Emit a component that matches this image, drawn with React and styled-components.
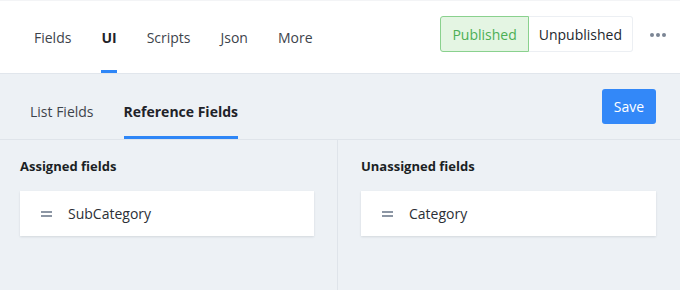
import React from 'react'
import styled, { createGlobalStyle } from 'styled-components'

const GlobalStyle = createGlobalStyle`
    body {
        margin: 0;
        background: #fff;
        font-family: "Open Sans", "Noto Sans", sans-serif;
        color: #2b2f36;
    }
`;

const Page = styled.div`
    width: 680px;
    height: 290px;
    display: flex;
    flex-direction: column;
    border-top: 1px solid #f3f4f6;
    box-sizing: border-box;
`;

const Header = styled.header`
    height: 72px;
    display: flex;
    padding: 0 14px 0 34px;
    border-bottom: 1px solid #e1e6ec;
    background: #fff;
    flex-shrink: 0;
`;

const Tabs = styled.nav`
    display: flex;
    gap: ${({ gap }) => gap}px;
    height: 100%;
`;

const Tab = styled.div`
    display: flex;
    align-items: center;
    box-sizing: border-box;
    padding-top: ${({ offset }) => offset}px;
    border-bottom: 3px solid ${({ active }) => (active ? '#2e86f7' : 'transparent')};
    font-size: 14px;
    font-weight: ${({ active }) => (active ? 700 : 400)};
    color: ${({ active }) => (active ? '#1f2329' : '#3d434b')};
    cursor: pointer;
`;

const HeaderRight = styled.div`
    margin-left: auto;
    display: flex;
    align-items: center;
    align-self: flex-start;
    margin-top: 15px;
    gap: 17px;
`;

const Toggle = styled.div`
    display: flex;
    height: 36px;
`;

const ToggleButton = styled.button`
    font-family: inherit;
    font-size: 14px;
    padding: 0 ${({ active }) => (active ? 11 : 10)}px;
    border: 1px solid ${({ active }) => (active ? '#8ad18e' : '#eceff3')};
    background: ${({ active }) => (active ? '#e4f5e3' : '#fff')};
    color: ${({ active }) => (active ? '#4caf55' : '#23272d')};
    border-radius: ${({ active }) => (active ? '3px 0 0 3px' : '0 3px 3px 0')};
    border-left-width: ${({ active }) => (active ? 1 : 0)}px;
    cursor: pointer;
`;

const Dots = styled.div`
    display: flex;
    gap: 2px;
    padding-top: 1px;
    span {
        width: 4px;
        height: 4px;
        border-radius: 50%;
        background: #7b8594;
    }
`;

const Body = styled.div`
    flex: 1;
    background: #edf1f5;
    display: flex;
    flex-direction: column;
`;

const SubBar = styled.div`
    height: 65px;
    display: flex;
    padding-left: 30px;
    padding-right: 24px;
    border-bottom: 1px solid #dfe4ea;
    flex-shrink: 0;
`;

const SaveButton = styled.button`
    margin-left: auto;
    margin-top: 15px;
    width: 54px;
    height: 35px;
    border: none;
    border-radius: 3px;
    background: #3388f8;
    color: #fff;
    font-family: inherit;
    font-size: 14px;
    cursor: pointer;
`;

const Columns = styled.div`
    flex: 1;
    display: grid;
    grid-template-columns: 337px 1fr;
`;

const Column = styled.section`
    padding: 17px ${({ right }) => right}px 0 ${({ left }) => left}px;
    border-left: ${({ divider }) => (divider ? '1px solid #dfe4ea' : 'none')};
`;

const ColumnTitle = styled.h3`
    margin: 0 0 16px;
    font-size: 13px;
    font-weight: 700;
    color: #1b1f24;
    line-height: 18px;
`;

const FieldCard = styled.div`
    height: 45px;
    background: #fff;
    display: flex;
    align-items: center;
    padding-left: 21px;
    gap: 16px;
    box-shadow: 0 1px 2px rgba(30, 40, 60, 0.12);
    font-size: 14px;
    color: #2b2f36;
`;

const Handle = styled.span`
    width: 11px;
    display: flex;
    flex-direction: column;
    gap: 2px;
    &::before, &::after {
        content: '';
        height: 2px;
        background: #8c96a4;
    }
`;

const Field = ({ name }) => (
    <FieldCard>
        <Handle />
        {name}
    </FieldCard>
);

export default function App() {
    return (
        <Page>
            <GlobalStyle />
            <Header>
                <Tabs gap={30}>
                    <Tab offset={3}>Fields</Tab>
                    <Tab offset={3} active>UI</Tab>
                    <Tab offset={3}>Scripts</Tab>
                    <Tab offset={3}>Json</Tab>
                    <Tab offset={3}>More</Tab>
                </Tabs>
                <HeaderRight>
                    <Toggle>
                        <ToggleButton active>Published</ToggleButton>
                        <ToggleButton>Unpublished</ToggleButton>
                    </Toggle>
                    <Dots><span /><span /><span /></Dots>
                </HeaderRight>
            </Header>
            <Body>
                <SubBar>
                    <Tabs gap={30}>
                        <Tab offset={12}>List Fields</Tab>
                        <Tab offset={12} active>Reference Fields</Tab>
                    </Tabs>
                    <SaveButton>Save</SaveButton>
                </SubBar>
                <Columns>
                    <Column left={20} right={23}>
                        <ColumnTitle>Assigned fields</ColumnTitle>
                        <Field name="SubCategory" />
                    </Column>
                    <Column left={23} right={24} divider>
                        <ColumnTitle>Unassigned fields</ColumnTitle>
                        <Field name="Category" />
                    </Column>
                </Columns>
            </Body>
        </Page>
    );
}
